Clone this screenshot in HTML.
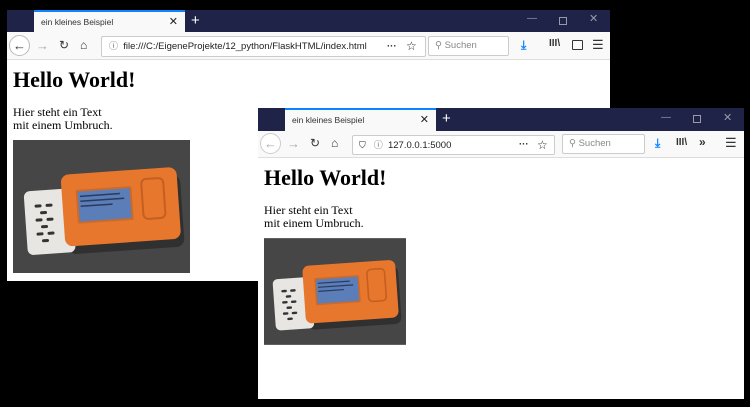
<!DOCTYPE html>
<html><head><meta charset="utf-8"><style>
*{margin:0;padding:0;box-sizing:border-box}
body{width:750px;height:407px;background:#000;position:relative;overflow:hidden;font-family:"Liberation Sans",sans-serif}
.win{position:absolute;background:#fff}
.title{position:absolute;left:0;right:0;top:0;background:#1f2347}
.tab{position:absolute;background:#f9f9fa;border-top:2px solid #0a84ff;font-size:8.5px;color:#333;padding-left:7px}
.tb{position:absolute;left:0;right:0;background:#f9f9fa;border-bottom:1px solid #ddd}
.field{position:absolute;background:#fff;border:1px solid #ccc;border-radius:2px;font-size:9.5px;color:#222}
.ic{position:absolute;font-size:12px;color:#333;line-height:1}
.content{position:absolute;left:0;right:0;font-family:"Liberation Serif",serif;color:#000}
h1{position:absolute;font-size:22px;font-weight:bold;white-space:nowrap}
p{position:absolute;font-size:12px;line-height:13px;white-space:nowrap}
svg.img{position:absolute}
</style></head><body>
<svg width="0" height="0" style="position:absolute"><defs>
<symbol id="dev" viewBox="0 0 177 133">
<rect width="177" height="133" fill="#454645"/>
<g transform="rotate(-4 90 70)">
<rect x="50" y="34" width="116" height="72" rx="8" fill="#1a1a1a" opacity=".5" transform="translate(3,6)"/>
<rect x="12" y="46" width="48" height="64" rx="6" fill="#e8e6e2"/>
<g fill="#333"><rect x="22" y="60" width="7" height="3" rx="1.5"/><rect x="33" y="60" width="7" height="3" rx="1.5"/><rect x="27" y="67" width="7" height="3" rx="1.5"/><rect x="22" y="74" width="7" height="3" rx="1.5"/><rect x="33" y="74" width="7" height="3" rx="1.5"/><rect x="27" y="81" width="7" height="3" rx="1.5"/><rect x="22" y="88" width="7" height="3" rx="1.5"/><rect x="33" y="88" width="7" height="3" rx="1.5"/><rect x="27" y="95" width="7" height="3" rx="1.5"/></g>
<rect x="50" y="32" width="116" height="72" rx="8" fill="#e8772e"/>
<rect x="64" y="48" width="56" height="34" rx="2" fill="#cc6a2a"/>
<rect x="66" y="50" width="52" height="30" fill="#5b7db8"/>
<rect x="68" y="54" width="40" height="1.5" fill="#2a3a60"/><rect x="68" y="59" width="44" height="1.5" fill="#2a3a60"/><rect x="68" y="64" width="32" height="1.5" fill="#2a3a60"/>
<rect x="130" y="42" width="22" height="40" rx="5" fill="none" stroke="#c45f20" stroke-width="2"/>
</g>
</symbol></defs></svg>

<!-- window 1 -->
<div class="win" style="left:7px;top:10px;width:603px;height:271px">
 <div class="title" style="height:22px"></div>
 <div class="tab" style="left:27px;top:0;width:151px;height:22px;line-height:20px">ein kleines Beispiel<span style="position:absolute;right:7px;font-size:11px;color:#222">✕</span></div>
 <div class="ic" style="left:184px;top:3px;color:#fff;font-size:15px">+</div>
 <div class="ic" style="left:520px;top:4px;color:#99a;font-size:10px">—</div>
 <div class="ic" style="left:552px;top:7px;width:8px;height:8px;border:1px solid #99a"></div>
 <div class="ic" style="left:582px;top:4px;color:#99a;font-size:11px">✕</div>
 <div class="tb" style="top:22px;height:28px">
  <div class="ic" style="left:2px;top:3px;width:21px;height:21px;border:1px solid #bbb;border-radius:50%;background:#fff;text-align:center;line-height:19px;font-size:13px">←</div>
  <div class="ic" style="left:29px;top:7px;color:#aaa;font-size:13px">→</div>
  <div class="ic" style="left:52px;top:7px">↻</div>
  <div class="ic" style="left:73px;top:7px">⌂</div>
  <div class="field" style="left:94px;top:4px;width:325px;height:21px;line-height:19px;padding-left:7px"><span style="color:#666;font-size:9px">ⓘ</span>&nbsp;&nbsp;file:///C:/EigeneProjekte/12_python/FlaskHTML/index.html<span style="position:absolute;left:285px;font-weight:bold">···</span><span style="position:absolute;left:304px;font-size:12px">☆</span></div>
  <div class="field" style="left:421px;top:4px;width:81px;height:20px;line-height:18px;padding-left:6px;color:#888">⚲ Suchen</div>
  <div class="ic" style="left:514px;top:7px;color:#0a84ff;font-weight:bold">⤓</div>
  <div class="ic" style="left:542px;top:7px;font-size:10px;font-weight:bold">III\</div>
  <div class="ic" style="left:565px;top:8px;width:11px;height:10px;border:1px solid #333;border-radius:1px"></div>
  <div class="ic" style="left:585px;top:6px;font-size:13px">☰</div>
 </div>
 <div class="content" style="top:50px;bottom:0">
  <h1 style="left:6px;top:7px">Hello World!</h1>
  <p style="left:6px;top:46px">Hier steht ein Text<br>mit einem Umbruch.</p>
  <svg class="img" style="left:6px;top:80px" width="177" height="133" preserveAspectRatio="none"><use href="#dev"/></svg>
 </div>
</div>

<!-- window 2 -->
<div class="win" style="left:258px;top:108px;width:486px;height:291px">
 <div class="title" style="height:23px"></div>
 <div class="tab" style="left:27px;top:0;width:151px;height:23px;line-height:21px">ein kleines Beispiel<span style="position:absolute;right:7px;font-size:11px;color:#222">✕</span></div>
 <div class="ic" style="left:184px;top:3px;color:#fff;font-size:15px">+</div>
 <div class="ic" style="left:403px;top:5px;color:#99a;font-size:10px">—</div>
 <div class="ic" style="left:435px;top:7px;width:8px;height:8px;border:1px solid #99a"></div>
 <div class="ic" style="left:465px;top:5px;color:#99a;font-size:11px">✕</div>
 <div class="tb" style="top:23px;height:27px">
  <div class="ic" style="left:2px;top:2px;width:21px;height:21px;border:1px solid #ccc;border-radius:50%;background:#fff;text-align:center;line-height:19px;font-size:13px;color:#aaa">←</div>
  <div class="ic" style="left:29px;top:6px;color:#aaa;font-size:13px">→</div>
  <div class="ic" style="left:52px;top:6px">↻</div>
  <div class="ic" style="left:73px;top:6px">⌂</div>
  <div class="field" style="left:94px;top:4px;width:203px;height:20px;line-height:18px;padding-left:6px"><span style="font-size:9px">⛉</span>&nbsp;&nbsp;&nbsp;<span style="color:#666;font-size:9px">ⓘ</span>&nbsp;&nbsp;127.0.0.1:5000<span style="position:absolute;left:166px;font-weight:bold">···</span><span style="position:absolute;left:184px;font-size:12px">☆</span></div>
  <div class="field" style="left:304px;top:3px;width:83px;height:20px;line-height:18px;padding-left:6px;color:#888">⚲ Suchen</div>
  <div class="ic" style="left:397px;top:6px;color:#0a84ff;font-weight:bold">⤓</div>
  <div class="ic" style="left:418px;top:7px;font-size:10px;font-weight:bold">III\</div>
  <div class="ic" style="left:441px;top:5px;font-size:12px;font-weight:bold">»</div>
  <div class="ic" style="left:467px;top:5px;font-size:13px">☰</div>
 </div>
 <div class="content" style="top:50px;bottom:0">
  <h1 style="left:6px;top:7px">Hello World!</h1>
  <p style="left:6px;top:46px">Hier steht ein Text<br>mit einem Umbruch.</p>
  <svg class="img" style="left:6px;top:80px" width="142" height="107" preserveAspectRatio="none"><use href="#dev"/></svg>
 </div>
</div>
</body></html>
